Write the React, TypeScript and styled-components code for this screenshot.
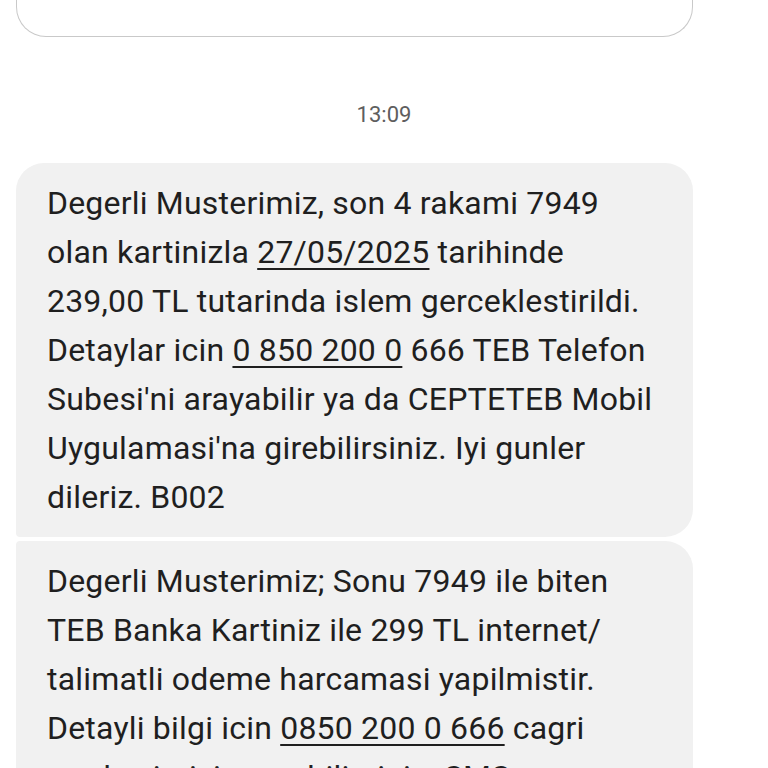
import React from 'react';
import styled, { createGlobalStyle } from 'styled-components';

const GlobalStyle = createGlobalStyle`
  html, body {
    margin: 0;
    padding: 0;
    background: #ffffff;
  }
  body {
    font-family: Roboto, "Noto Sans", "Liberation Sans", sans-serif;
    overflow: hidden;
  }
`;

const Thread = styled.div`
  width: 768px;
  height: 768px;
  overflow: hidden;
  display: flex;
  flex-direction: column;
`;

const PrevBubble = styled.div`
  height: 37px;
  margin: 0 75px 0 16px;
  flex-shrink: 0;
  box-sizing: border-box;
  border: 1.5px solid #c9c9c9;
  border-top: none;
  border-radius: 0 0 30px 30px;
  background: #ffffff;
`;

const TimeStamp = styled.div`
  margin: 65px 0 35px;
  text-align: center;
  font-size: 22px;
  line-height: 26px;
  color: #5e5e5e;
`;

const Group = styled.div`
  margin: 0 75px 0 16px;
  display: flex;
  flex-direction: column;
  gap: 4px;
`;

const Bubble = styled.div<{ $first?: boolean; $last?: boolean }>`
  flex-shrink: 0;
  background: #f1f1f1;
  padding: 16px 20px 15px 31px;
  border-radius: ${(p) => (p.$first ? '28px' : '4px')} 28px 28px
    ${(p) => (p.$last ? '28px' : '4px')};
  color: #1f1f1f;
  font-size: 32px;
  line-height: 49px;
  letter-spacing: 0.2px;
`;

const Line = styled.div`
  white-space: nowrap;
`;

const Link = styled.span`
  text-decoration: underline;
  text-decoration-thickness: 2px;
  text-underline-offset: 5px;
`;

export default function App() {
  return (
    <>
      <GlobalStyle />
      <Thread>
        <PrevBubble />
        <TimeStamp>13:09</TimeStamp>
        <Group>
          <Bubble $first>
            <Line>Degerli Musterimiz, son 4 rakami 7949</Line>
            <Line>
              olan kartinizla <Link>27/05/2025</Link> tarihinde
            </Line>
            <Line>239,00 TL tutarinda islem gerceklestirildi.</Line>
            <Line>
              Detaylar icin <Link>0 850 200 0</Link> 666 TEB Telefon
            </Line>
            <Line>Subesi'ni arayabilir ya da CEPTETEB Mobil</Line>
            <Line>Uygulamasi'na girebilirsiniz. Iyi gunler</Line>
            <Line>dileriz. B002</Line>
          </Bubble>
          <Bubble>
            <Line>Degerli Musterimiz; Sonu 7949 ile biten</Line>
            <Line>TEB Banka Kartiniz ile 299 TL internet/</Line>
            <Line>talimatli odeme harcamasi yapilmistir.</Line>
            <Line>
              Detayli bilgi icin <Link>0850 200 0 666</Link> cagri
            </Line>
            <Line>merkezimizi arayabilirsiniz. SMS</Line>
          </Bubble>
        </Group>
      </Thread>
    </>
  );
}
